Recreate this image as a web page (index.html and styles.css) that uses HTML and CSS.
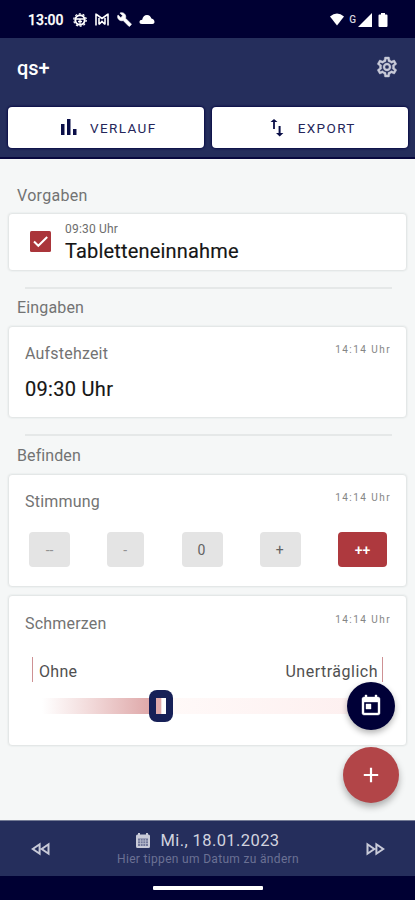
FILE: index.html
```html
<!DOCTYPE html>
<html lang="de">
<head>
<meta charset="utf-8">
<meta name="viewport" content="width=device-width">
<title>qs+</title>
<link rel="stylesheet" href="styles.css">
</head>
<body>
<div class="screen">
  <div class="status">
    <span class="clock">13:00</span>
    <svg class="s-debug" width="14" height="14" viewBox="0 0 14 14" fill="none" stroke="#fff"><circle cx="7" cy="7" r="4.700" stroke-width="2"/><circle cx="7" cy="7" r="6.200" stroke-width="1.300" stroke-dasharray="2 1.900"/><path d="M3 6h8M5 8.500h4M7 6v6" stroke-width="1.300"/></svg>
    <svg class="s-m" width="14" height="13" viewBox="0 0 14 13" fill="none" stroke="#fff"><path d="M1 .5v12M13 .5v12M1.500 1.500L7 5.500l5.500-4M4 5v6.500M10 5v6.500M4 11.500L7 8.500l3 3" stroke-width="1.600"/></svg>
    <svg class="s-wrench" width="15" height="15" viewBox="0 0 24 24" fill="#fff" stroke="#fff"><path d="M22.700 19l-9.100-9.100c.9-2.300.4-5-1.500-6.900-2-2-5-2.400-7.400-1.300L9 6 6 9 1.600 4.700C.4 7.100.9 10.100 2.900 12.100c1.900 1.900 4.600 2.400 6.900 1.500l9.100 9.100c.4.400 1 .4 1.400 0l2.300-2.300c.5-.4.5-1.100.1-1.400z"/></svg>
    <svg class="s-cloud" width="16" height="9" viewBox="0 0 16 9" fill="#fff"><path d="M3 9C1 9 .5 8 .5 7c0-1.500 1.300-2.200 2.700-2.200C3.800 2 5.500 0 8 0c2.400 0 3.800 1.500 4.400 3.600C14.500 4 15.500 5.300 15.500 7c0 1.200-.8 2-2.200 2z"/></svg>
    <div class="signals">
      <svg width="16" height="13" viewBox="0 0 16 13" fill="#fff"><path d="M1 3.500Q8-2.500 15 3.500L8 12.500z"/></svg>
      <span class="net">G</span>
      <svg class="s-cell" width="14" height="14" viewBox="0 0 14 14" fill="#fff"><path d="M0 14L14 0v14z"/></svg>
      <svg width="10" height="14" viewBox="0 0 10 14" fill="#fff"><path d="M3 0h4v1.500h1.500q1 0 1 1V13q0 1-1 1h-7q-1 0-1-1V2.500q0-1 1-1H3z"/></svg>
    </div>
  </div>
  <header class="header">
    <div class="bar">
      <h1>qs+</h1>
      <svg class="gear" width="24" height="24" viewBox="0 0 24 24" fill="#c8cad8" stroke="#c8cad8" stroke-width=".4"><path d="M19.430 12.980c.04-.32.07-.64.07-.98s-.03-.66-.07-.98l2.110-1.650c.19-.15.24-.42.12-.64l-2-3.460c-.12-.22-.39-.3-.61-.22l-2.490 1c-.52-.4-1.080-.73-1.690-.98l-.38-2.650A.488.488 0 0 0 14 2h-4c-.25 0-.46.18-.49.42l-.38 2.650c-.61.25-1.170.59-1.690.98l-2.490-1c-.23-.09-.49 0-.61.22l-2 3.460c-.13.22-.07.49.12.64l2.110 1.650c-.04.32-.07.65-.07.98s.03.66.07.98l-2.110 1.650c-.19.15-.24.42-.12.64l2 3.460c.12.22.39.3.61.22l2.490-1c.52.4 1.080.73 1.690.98l.38 2.650c.03.24.24.42.49.42h4c.25 0 .46-.18.49-.42l.38-2.650c.61-.25 1.170-.59 1.690-.98l2.490 1c.23.09.49 0 .61-.22l2-3.460c.12-.22.07-.49-.12-.64l-2.110-1.650zm-1.980-1.710c.04.31.05.52.05.73s-.02.43-.05.73l-.14 1.130.89.7 1.080.84-.7 1.210-1.270-.51-1.040-.42-.9.68c-.43.32-.84.56-1.250.73l-1.060.43-.16 1.130-.2 1.350h-1.400l-.19-1.350-.16-1.130-1.060-.43c-.43-.18-.83-.41-1.230-.71l-.91-.7-1.060.43-1.270.51-.7-1.210 1.080-.84.89-.7-.14-1.130c-.03-.31-.05-.54-.05-.74s.02-.43.05-.73l.14-1.130-.89-.7-1.080-.84.7-1.210 1.270.51 1.040.42.9-.68c.43-.32.84-.56 1.250-.73l1.060-.43.16-1.130.2-1.350h1.390l.19 1.350.16 1.130 1.060.43c.43.18.83.41 1.230.71l.91.7 1.060-.43 1.270-.51.7 1.210-1.070.85-.89.7.14 1.130zM12 8c-2.210 0-4 1.790-4 4s1.790 4 4 4 4-1.790 4-4-1.790-4-4-4zm0 6c-1.100 0-2-.9-2-2s.9-2 2-2 2 .9 2 2-.9 2-2 2z"/></svg>
    </div>
    <div class="tabs">
      <button class="tab"><svg width="18" height="17" viewBox="0 0 18 17" fill="#0b0f48"><path d="M1 5h3.500v11H1zM7 0h3.500v16H7zM13 10h3.500v6H13z"/></svg><span>VERLAUF</span></button>
      <button class="tab export"><svg width="14" height="18" viewBox="0 0 14 18" fill="#0b0f48"><path d="M3.100 10V3H.5L4 0l3.500 3H4.900v7zM8.600 7v7H6l3.700 3.500L13.400 14h-2.800V7z"/></svg><span>EXPORT</span></button>
    </div>
  </header>
  <main class="content">
    <h2>Vorgaben</h2>
    <section class="card task">
      <svg class="check" width="21" height="21" viewBox="0 0 21 21"><rect width="21" height="21" rx="1.500" fill="#aa353a"/><path d="M4 10.500l4.300 4.300L17.200 6" fill="none" stroke="#fff" stroke-width="2"/></svg>
      <div><div class="small">09:30 Uhr</div><div class="strong">Tabletteneinnahme</div></div>
    </section>
    <hr>
    <h2 class="inputs">Eingaben</h2>
    <section class="card wake">
      <div class="row"><span class="label">Aufstehzeit</span><span class="time">14:14 Uhr</span></div>
      <div class="strong value">09:30 Uhr</div>
    </section>
    <hr>
    <h2 class="feel">Befinden</h2>
    <section class="card mood">
      <div class="row"><span class="label">Stimmung</span><span class="time">14:14 Uhr</span></div>
      <div class="choices">
        <button class="c1">--</button><button class="c2">-</button><button class="c3">0</button><button class="c4">+</button><button class="c5">++</button>
      </div>
    </section>
    <section class="card pain">
      <div class="row"><span class="label">Schmerzen</span><span class="time">14:14 Uhr</span></div>
      <div class="ends"><span class="low">Ohne</span><span class="high">Unerträglich</span></div>
      <div class="track"><div class="fill"></div><div class="thumb"><div class="window"></div></div><div class="rest"></div></div>
    </section>
    <button class="fab today"><svg width="24" height="24" viewBox="0 0 24 24"><path d="M19 3h-1V1h-2v2H8V1H6v2H5c-1.110 0-1.990.9-1.990 2L3 19c0 1.100.89 2 2 2h14c1.100 0 2-.9 2-2V5c0-1.100-.9-2-2-2zm0 16H5V8h14v11zM7 10h5v5H7z" fill="#fff" stroke="#fff" stroke-width=".4"/></svg></button>
    <button class="fab add"><svg width="16" height="16" viewBox="0 0 16 16"><path d="M8 .8v14.400M.8 8h14.400" stroke="#fff" stroke-width="2.200"/></svg></button>
  </main>
  <footer class="footer">
    <svg width="19" height="14" viewBox="0 0 19 14" fill="none" stroke="#c8cad8" stroke-width="2"><path d="M8.600 2.300v9.400L1.800 7zM17.500 2.300v9.400L10.700 7z"/></svg>
    <div class="date">
      <div class="day"><svg width="14" height="15" viewBox="0 0 14 15"><path d="M2 1.500V0h2v1.500h6V0h2v1.500h.5q1.500 0 1.500 1.500v10.500q0 1.500-1.500 1.500h-11Q0 15 0 13.500V3q0-1.500 1.500-1.500z" fill="#c8cad8"/><path d="M2 5.500h10V13H2z" fill="#71779a"/><path d="M4.500 6v7M7 6v7M9.500 6v7M2 8h10M2 10.500h10" stroke="#b4b7ca" stroke-width=".8"/></svg><span>Mi., 18.01.2023</span></div>
      <div class="hint">Hier tippen um Datum zu ändern</div>
    </div>
    <svg width="19" height="14" viewBox="0 0 19 14" fill="none" stroke="#c8cad8" stroke-width="2"><path d="M1.500 2.300v9.400L8.300 7zM10.400 2.300v9.400L17.200 7z"/></svg>
  </footer>
  <div class="gesture"><div class="pill"></div></div>
</div>
</body>
</html>
```
FILE: styles.css
```css
* { box-sizing: border-box; }
body { margin: 0; font-family: Roboto, sans-serif; }
button { border: 0; padding: 0; margin: 0; font-family: inherit; }
svg { display: block; flex: none; }
.screen { width: 415px; height: 900px; display: flex; flex-direction: column; overflow: hidden; background: #f5f7f7; }

.status { height: 38px; flex: none; background: #000033; display: flex; align-items: center; padding: 1px 27px 0 28px; color: #fff; }
.clock { font-size: 14px; font-weight: 500; width: 45px; white-space: nowrap; -webkit-text-stroke: .25px #fff; }
.s-m { margin-left: 8px; }
.s-wrench { margin-left: 8px; }
.s-cloud { margin-left: 7px; }
.signals { margin-left: auto; display: flex; align-items: center; }
.net { font-size: 10px; font-weight: 500; margin-left: 4px; color: #d5d5df; }
.s-cell { margin: 0 6px 0 2px; }

.header { height: 121px; flex: none; background: #252e5c; border-bottom: 2px solid #08083e; }
.bar { height: 59px; display: flex; align-items: center; justify-content: space-between; padding: 0 16px 0 17px; }
.gear { margin-bottom: 2px; }
h1 { margin: 0; font-size: 20px; font-weight: 500; line-height: 24px; color: #fff; }
.tabs { display: flex; gap: 8px; padding: 10px 7px 0 8px; }
.tab { height: 41px; flex: 1; border-radius: 4px; background: #fff; display: flex; align-items: center; justify-content: center; gap: 12px; padding-left: 5px; color: #25265a; font-size: 13.500px; letter-spacing: 1.400px; box-shadow: 0 0 2px 1px #0b0d47; }
.tab.export { gap: 14px; padding-left: 6px; }

.content { height: 661px; flex: none; position: relative; padding: 24px 8px 0; }
h2 { margin: 0 0 5px 9px; height: 25px; font-size: 16px; line-height: 25px; font-weight: 400; letter-spacing: .3px; color: #727373; }
h2.inputs { line-height: 24px; letter-spacing: .15px; }
h2.feel { line-height: 26px; letter-spacing: .1px; margin-bottom: 6px; }
.card { background: #fff; border: 1px solid #e4e7e7; border-radius: 4px; box-shadow: 0 0 1px 1px #edf0f0; }
hr { border: 0; height: 2px; margin: 16px 15px 7px 17px; background: #e5e8e8; }
.task { height: 58px; display: flex; padding: 8px 0 0 21px; }
.check { margin: 9px 14px 0 0; }
.small { font-size: 12px; line-height: 15px; color: #6d6d6d; letter-spacing: .2px; }
.strong { font-size: 20px; line-height: 28px; color: #151515; letter-spacing: .18px; -webkit-text-stroke: .15px #151515; }
.task .strong { line-height: 29px; }
.row { display: flex; justify-content: space-between; padding: 0 16px; }
.label { font-size: 16px; line-height: 24px; letter-spacing: .2px; color: #737373; }
.time { font-size: 10px; line-height: 16px; letter-spacing: 1.450px; color: #858585; margin-right: -1px; }
.wake { height: 92px; padding-top: 15px; }
.value { margin: 9px 0 0 16px; letter-spacing: .3px; }
.mood { height: 113px; padding-top: 15px; }
.choices { display: flex; justify-content: space-between; padding: 18px 19px 0 20px; }
.choices button { height: 35px; border-radius: 4px; background: #e4e4e4; font-size: 14px; letter-spacing: 1px; color: #626262; }
.choices .c1 { width: 41px; color: #929292; letter-spacing: 0; }
.choices .c2 { width: 37px; color: #929292; }
.choices .c3, .choices .c4 { width: 41px; }
.choices .c5 { width: 49px; background: #ae393e; color: #fff; font-weight: 500; letter-spacing: 0; }
.pain { height: 151px; margin-top: 8px; padding-top: 16px; }
.ends { display: flex; justify-content: space-between; height: 25px; margin: 21px 23px 0; font-size: 16px; line-height: 29px; letter-spacing: .5px; color: #505050; }
.low { border-left: 1px solid #ce9194; padding-left: 6px; letter-spacing: .3px; }
.high { border-right: 1px solid #ce9194; padding-right: 4px; }
.track { display: flex; align-items: center; margin: 7px 23px 0 33px; height: 34px; }
.fill { width: 107px; height: 16px; background: linear-gradient(90deg, #fff, #f2dada 45%, #dfa9aa); }
.thumb { width: 24px; height: 32px; border-radius: 8px; background: #172057; display: flex; align-items: center; justify-content: center; }
.window { width: 10px; height: 16px; background: linear-gradient(90deg, #e1aaaa 45%, #fff 60%); }
.rest { flex: 1; height: 16px; background: linear-gradient(90deg, #fff9f8, #fdeeee); }
.fab { position: absolute; display: flex; align-items: center; justify-content: center; border-radius: 50%; }
.today { width: 48px; height: 48px; left: 347px; top: 523px; background: #000037; box-shadow: 0 3px 6px rgba(0,0,0,.3); }
.add { width: 56px; height: 56px; left: 343px; top: 588px; background: #b24548; box-shadow: 0 4px 7px rgba(0,0,0,.3); }

.footer { height: 56px; flex: none; background: #252e5c; border-top: 1px solid #747b95; display: flex; align-items: center; justify-content: space-between; padding: 0 30px 0 31px; }
.date { color: #d1d3df; }
.day { display: flex; align-items: center; justify-content: center; gap: 10px; font-size: 16.500px; line-height: 21px; letter-spacing: .4px; }
.hint { font-size: 12px; line-height: 17px; color: #6b7194; letter-spacing: .32px; text-align: center; }
.gesture { height: 24px; flex: none; background: #000033; padding-top: 10px; }
.pill { width: 110px; height: 4px; margin: 0 auto; border-radius: 1px; background: #fff; }
```
